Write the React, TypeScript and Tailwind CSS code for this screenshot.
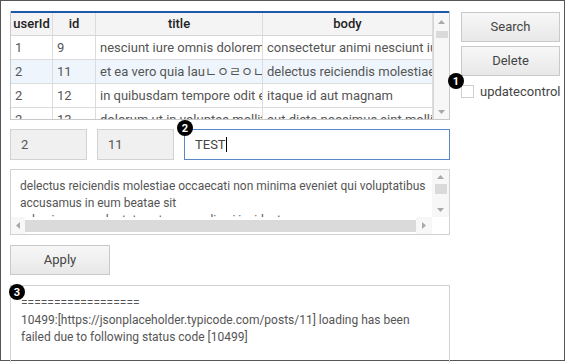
import React from "react";

const F = { fontFamily: 'Roboto, "Noto Sans CJK KR", sans-serif' };

function Badge({ n, className }: { n: string; className: string }) {
  return (
    <div
      className={`absolute w-[16px] h-[16px] rounded-full bg-black text-white text-[11px] font-bold flex items-center justify-center leading-none z-10 ${className}`}
    >
      {n}
    </div>
  );
}

function Up() {
  return (
    <svg width="7" height="4" viewBox="0 0 7 4">
      <path d="M0 4 L3.5 0 L7 4 Z" fill="#a9a9a9" />
    </svg>
  );
}
function Down() {
  return (
    <svg width="7" height="4" viewBox="0 0 7 4">
      <path d="M0 0 L3.5 4 L7 0 Z" fill="#a9a9a9" />
    </svg>
  );
}
function Left() {
  return (
    <svg width="4" height="7" viewBox="0 0 4 7">
      <path d="M4 0 L0 3.5 L4 7 Z" fill="#a9a9a9" />
    </svg>
  );
}
function Right() {
  return (
    <svg width="4" height="7" viewBox="0 0 4 7">
      <path d="M0 0 L4 3.5 L0 7 Z" fill="#a9a9a9" />
    </svg>
  );
}

const rows = [
  ["1", "9", "nesciunt iure omnis dolorem tempora et accusantium", "consectetur animi nesciunt iure dolore enim quia ad"],
  ["2", "11", "et ea vero quia lauㄴㅇㄹㅇㄴ", "delectus reiciendis molestiae occaecati non minima"],
  ["2", "12", "in quibusdam tempore odit est dolorem", "itaque id aut magnam"],
  ["2", "13", "dolorum ut in voluptas mollitia et saepe quo animi", "aut dicta possimus sint mollitia voluptas commodi"],
];

function Cell({ children, center, bold, w }: { children: React.ReactNode; center?: boolean; bold?: boolean; w: string }) {
  return (
    <div
      className={`${w} shrink-0 h-full border-r border-[#dcdcdc] overflow-hidden whitespace-nowrap flex items-center ${
        center ? "justify-center" : "pl-[4px]"
      } ${bold ? "font-medium text-[#222]" : "text-[#555]"}`}
    >
      {children}
    </div>
  );
}

const widths = ["w-[42px]", "w-[43px]", "w-[167px]", "w-[170px]"];

export default function App() {
  return (
    <div className="w-[566px] h-[362px] bg-white overflow-hidden" style={F}>
      <div className="relative w-[565px] h-[361px] border border-[#555] pl-[9px] pt-[10px] text-[13px]">
        <Badge n="1" className="left-[447px] top-[72px]" />
        <Badge n="2" className="left-[176px] top-[119px]" />
        <Badge n="3" className="left-[8px] top-[283px]" />

        <div className="flex gap-[11px]">
          {/* grid */}
          <div className="w-[440px] shrink-0 h-[109px] border border-t-0 border-[#c8c8c8] flex flex-col overflow-hidden">
            <div className="h-[2px] bg-[#1e5aa8] shrink-0" />
            <div className="flex flex-1 min-h-0">
              <div className="w-[422px] flex flex-col">
                <div className="h-[23px] flex bg-[#f4f4f4] border-b border-[#d6d6d6] shrink-0">
                  <Cell w={widths[0]} center bold>userId</Cell>
                  <Cell w={widths[1]} center bold>id</Cell>
                  <Cell w={widths[2]} center bold>title</Cell>
                  <Cell w={widths[3]} center bold>body</Cell>
                </div>
                {rows.map((r, i) => (
                  <div
                    key={i}
                    className={`h-[24px] flex border-b border-[#dcdcdc] shrink-0 ${i === 1 ? "bg-[#eef5fc]" : "bg-white"}`}
                  >
                    {r.map((c, j) => (
                      <Cell key={j} w={widths[j]}>
                        {c}
                      </Cell>
                    ))}
                  </div>
                ))}
              </div>
              <div className="flex-1 bg-[#f7f7f7] border-l border-[#d6d6d6] flex flex-col items-center">
                <div className="h-[18px] flex items-center justify-center"><Up /></div>
                <div className="w-[12px] h-[7px] bg-[#dadada]" />
                <div className="flex-1" />
                <div className="h-[14px] flex items-center justify-center"><Down /></div>
              </div>
            </div>
          </div>

          {/* right */}
          <div className="flex flex-col pt-[1px] shrink-0">
            <button className="w-[99px] h-[30px] border border-[#c9c9c9] bg-gradient-to-b from-[#f7f7f7] to-[#e8e8e8] text-[#444]">
              Search
            </button>
            <button className="mt-[4px] w-[99px] h-[30px] border border-[#c9c9c9] bg-gradient-to-b from-[#f7f7f7] to-[#e8e8e8] text-[#444]">
              Delete
            </button>
            <div className="mt-[9px] flex items-center gap-[6px]">
              <div className="w-[13px] h-[13px] border border-[#cfcfcf] bg-white shrink-0" />
              <span className="text-[#444] leading-none whitespace-nowrap">updatecontrol</span>
            </div>
          </div>
        </div>

        {/* inputs */}
        <div className="mt-[9px] flex gap-[10px] w-[440px]">
          <div className="w-[77px] h-[31px] border border-[#d2d2d2] bg-[#f0f0f0] flex items-center pl-[10px] text-[#555]">2</div>
          <div className="w-[77px] h-[31px] border border-[#d2d2d2] bg-[#f0f0f0] flex items-center pl-[10px] text-[#555]">11</div>
          <div className="flex-1 h-[31px] border border-[#5b87c8] bg-white flex items-center pl-[10px] text-[#444]">
            TEST<span className="inline-block w-[1px] h-[15px] bg-black" />
          </div>
        </div>

        {/* textarea */}
        <div className="mt-[9px] w-[440px] h-[66px] border border-[#d2d2d2] flex flex-col">
          <div className="flex flex-1 min-h-0">
            <div className="flex-1 overflow-hidden pl-[9px] pt-[8px] text-[12px] leading-[17px] text-[#555] whitespace-nowrap">
              <div>delectus reiciendis molestiae occaecati non minima eveniet qui voluptatibus</div>
              <div>accusamus in eum beatae sit</div>
              <div>vel qui neque voluptates ut commodi qui incidunt</div>
            </div>
            <div className="w-[17px] bg-[#f7f7f7] flex flex-col items-center">
              <div className="h-[14px] flex items-center justify-center"><Up /></div>
              <div className="w-[12px] h-[10px] bg-[#dadada]" />
              <div className="flex-1" />
              <div className="h-[14px] flex items-center justify-center"><Down /></div>
            </div>
          </div>
          <div className="h-[17px] flex items-center shrink-0">
            <div className="w-[14px] flex justify-center bg-[#f7f7f7] h-full items-center"><Left /></div>
            <div className="w-[391px] h-[12px] bg-[#dadada]" />
            <div className="w-[16px] flex justify-center h-full items-center bg-[#f7f7f7]"><Right /></div>
            <div className="flex-1 h-full bg-white" />
          </div>
        </div>

        {/* apply */}
        <button className="mt-[10px] w-[100px] h-[30px] border border-[#c9c9c9] bg-gradient-to-b from-[#f7f7f7] to-[#e8e8e8] text-[#444]">
          Apply
        </button>

        {/* log */}
        <div className="mt-[10px] w-[440px] h-[90px] border border-[#d2d2d2] pl-[10px] pt-[9px] text-[12px] leading-[17px] text-[#555]">
          <div>==================</div>
          <div>10499:[https://jsonplaceholder.typicode.com/posts/11] loading has been</div>
          <div>failed due to following status code [10499]</div>
        </div>
      </div>
    </div>
  );
}
